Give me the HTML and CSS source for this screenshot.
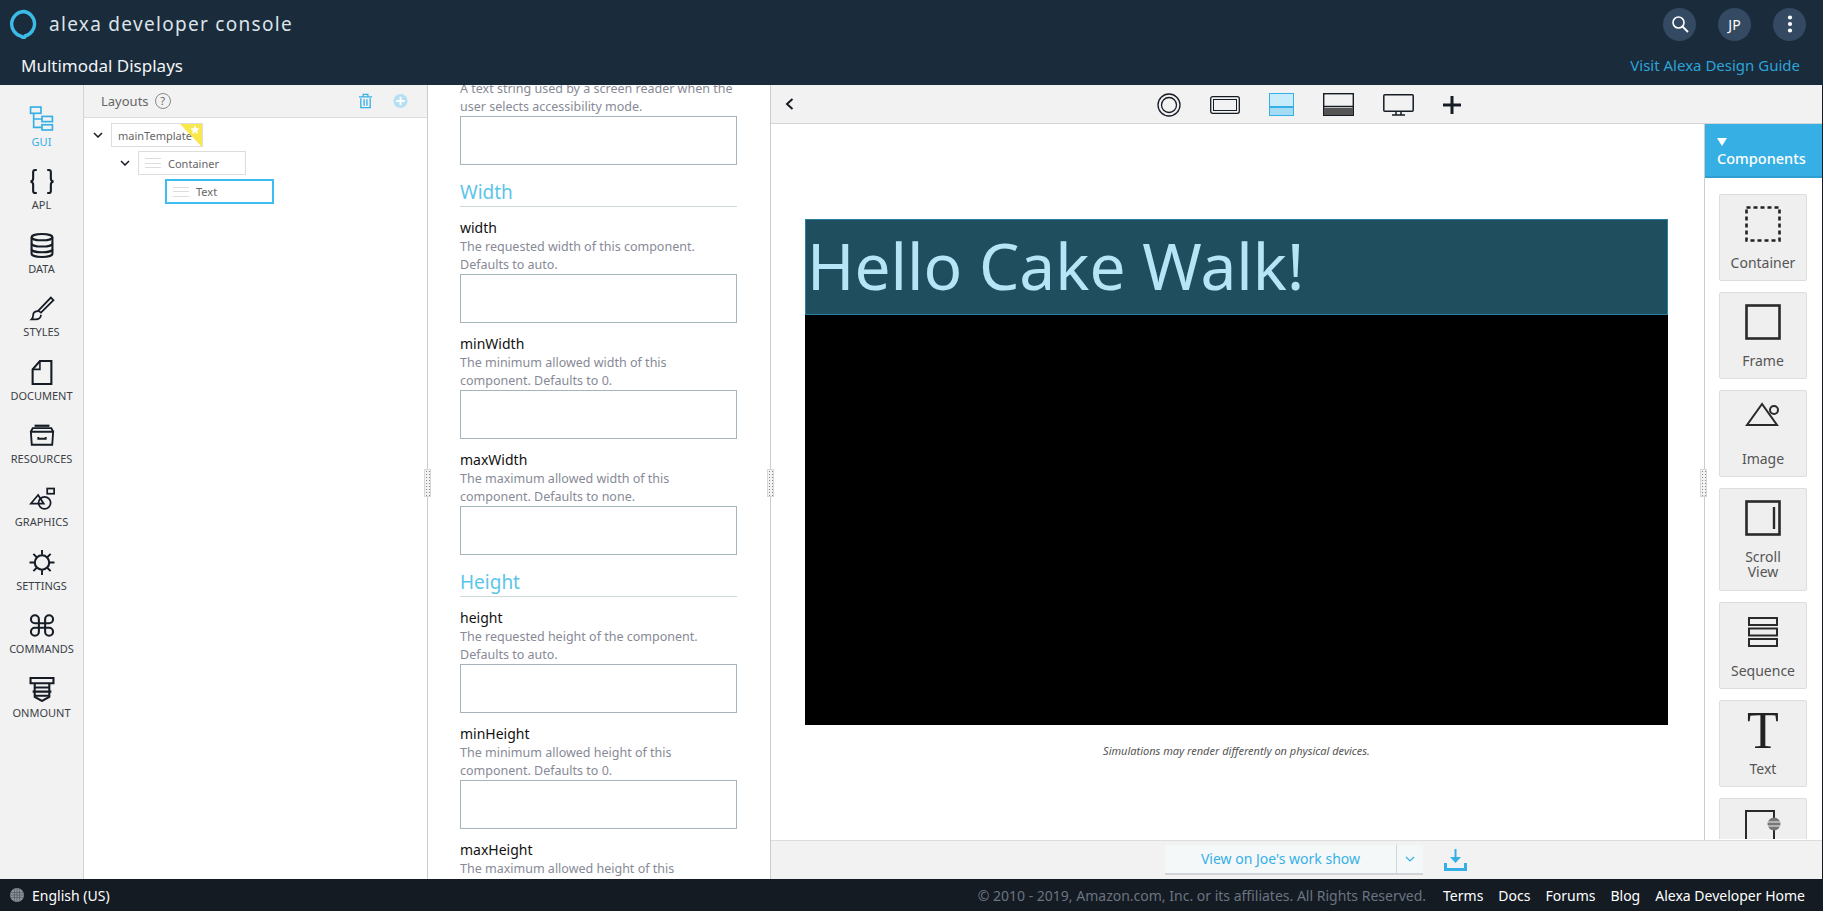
FILE: index.html
```html
<!DOCTYPE html>
<html>
  <head>
    <meta charset="UTF-8" />
    <title>Multimodal Displays</title>
    <link rel="stylesheet" href="styles.css">
  </head>
  <body>
    <header class="top-bar">
      <div class="top-row">
        <svg class="logo" viewBox="0 0 30 30"><path d="M15 2.5a12.5 12.5 0 0 0-3 24.6l3 2.4 1-2.5A12.5 12.5 0 0 0 15 2.5z" fill="none" stroke="#3dbbe8" stroke-width="3.4"/></svg>
        <span class="brand">alexa developer console</span>
        <div class="top-actions">
          <span class="round-btn"><svg viewBox="0 0 20 20" width="20" height="20"><circle cx="8.5" cy="8.5" r="5.5" fill="none" stroke="#fff" stroke-width="1.6"/><path d="M12.5 12.5l5.5 5.5" stroke="#fff" stroke-width="1.8"/></svg></span>
          <span class="round-btn">JP</span>
          <span class="round-btn"><svg viewBox="0 0 20 20" width="20" height="20"><circle cx="10" cy="3.5" r="2.1" fill="#fff"/><circle cx="10" cy="10" r="2.1" fill="#fff"/><circle cx="10" cy="16.5" r="2.1" fill="#fff"/></svg></span>
        </div>
      </div>
      <div class="sub-row">
        <span class="page-title">Multimodal Displays</span>
        <a class="guide-link">Visit Alexa Design Guide</a>
      </div>
    </header>

    <main class="workspace">
      <nav class="rail">
        <div class="rail-item active">
          <svg viewBox="0 0 24 24"><g fill="none" stroke="#35b0e6" stroke-width="1.6"><rect x="1" y="1" width="10" height="6"/><rect x="12" y="10" width="10" height="5"/><rect x="12" y="18" width="10" height="5"/><path d="M4 7v13.5h8M4 12.5h8"/></g></svg>
          <span>GUI</span>
        </div>
        <div class="rail-item">
          <svg viewBox="0 0 24 24"><g fill="none" stroke="#161c26" stroke-width="2"><path d="M7 1H5.5Q3.500 1 3.500 3v6q0 2.500-2.500 3 2.500.5 2.500 3v6q0 2 2 2H7"/><path d="M17 1h1.500q2 0 2 2v6q0 2.500 2.500 3-2.500.5-2.500 3v6q0 2-2 2H17"/></g></svg>
          <span>APL</span>
        </div>
        <div class="rail-item">
          <svg viewBox="0 0 24 24"><g fill="none" stroke="#161c26" stroke-width="2"><ellipse cx="12" cy="4" rx="10" ry="3"/><path d="M2 4v16c0 1.700 4.500 3 10 3s10-1.300 10-3V4"/><path d="M2 10c0 1.700 4.500 3 10 3s10-1.300 10-3M2 15.500c0 1.700 4.500 3 10 3s10-1.300 10-3"/></g></svg>
          <span>DATA</span>
        </div>
        <div class="rail-item">
          <svg viewBox="0 0 24 24"><g fill="none" stroke="#161c26" stroke-width="1.700"><path d="M8.500 14L20.500 1.500l2.500 2.500L11 16z"/><path d="M8.500 14.500c-3 0-5 1.500-5 4 0 1.500-.5 3-1.500 4h4c3 0 5-2 5-4.500"/></g></svg>
          <span>STYLES</span>
        </div>
        <div class="rail-item">
          <svg viewBox="0 0 24 24"><g fill="none" stroke="#161c26" stroke-width="2"><path d="M10 1h11v22H3V9z"/><path d="M10 1v8H3" stroke-width="1.500"/></g></svg>
          <span>DOCUMENT</span>
        </div>
        <div class="rail-item">
          <svg viewBox="0 0 28 24"><g fill="none" stroke="#161c26" stroke-width="2"><path d="M2 8h24l-1 14H3z"/><path d="M2 8l2-4h20l2 4"/><path d="M6 1.500h16" stroke-width="2.400"/><path d="M10 13.500v2h8v-2"/></g></svg>
          <span>RESOURCES</span>
        </div>
        <div class="rail-item">
          <svg viewBox="0 0 30 26"><g fill="none" stroke="#161c26" stroke-width="2"><rect x="21" y="1.500" width="8" height="6"/><path d="M10.500 9L2 19h15z"/><circle cx="18" cy="18" r="7"/></g></svg>
          <span>GRAPHICS</span>
        </div>
        <div class="rail-item">
          <svg viewBox="0 0 26 26"><circle cx="13" cy="13" r="7.500" fill="none" stroke="#161c26" stroke-width="2.200"/><g stroke="#161c26" stroke-width="2"><path d="M13 0v5M13 21v5M0 13h5M21 13h5M4 4l3.500 3.500M18.500 18.500L22 22M22 4l-3.500 3.500M7.500 18.500L4 22"/></g></svg>
          <span>SETTINGS</span>
        </div>
        <div class="rail-item">
          <svg viewBox="0 0 24 24"><path d="M15 6v12a3.800 3.800 0 1 0 3.800-3.800H5.200A3.800 3.800 0 1 0 9 18V6a3.800 3.800 0 1 0-3.800 3.800h13.600A3.800 3.800 0 1 0 15 6" fill="none" stroke="#161c26" stroke-width="2"/></svg>
          <span>COMMANDS</span>
        </div>
        <div class="rail-item">
          <svg viewBox="0 0 24 24"><g fill="none" stroke="#161c26" stroke-width="2"><path d="M1 1h22v5H1z"/><path d="M5 6v13l7 4 7-4V6"/><path d="M5 10h14M3 14h18M5 18h14"/></g></svg>
          <span>ONMOUNT</span>
        </div>
      </nav>

      <section class="layouts">
        <div class="layouts-head">
          <span class="layouts-title">Layouts</span>
          <span class="help-dot">?</span>
          <svg class="head-icon trash" viewBox="0 0 16 16"><g fill="none" stroke="#35b0e6" stroke-width="1.400"><path d="M1 3.500h14M5.500 3V1h5v2"/><path d="M3 5v10h10V5M6.500 6v7M9.500 6v7"/></g></svg>
          <svg class="head-icon" viewBox="0 0 16 16"><circle cx="8" cy="8" r="7.500" fill="#b5e0f4"/><path d="M8 3.500v9M3.500 8h9" stroke="#fff" stroke-width="2"/></svg>
        </div>
        <div class="tree">
          <div class="tree-row">
            <svg class="chevron" viewBox="0 0 10 6"><path d="M1 1l4 4 4-4" fill="none" stroke="#161c26" stroke-width="1.500"/></svg>
            <div class="node node-root">mainTemplate
              <svg class="star-badge" viewBox="0 0 22 23"><path d="M0 0h22v23z" fill="#f8e84a"/><path d="M15 1l1.400 3.200 3.400.3-2.600 2.200.8 3.300-3-1.800-3 1.800.8-3.300-2.600-2.200 3.400-.3z" fill="#fff"/></svg>
            </div>
          </div>
          <div class="tree-row level-1">
            <svg class="chevron" viewBox="0 0 10 6"><path d="M1 1l4 4 4-4" fill="none" stroke="#161c26" stroke-width="1.500"/></svg>
            <div class="node"><span class="grip"></span>Container</div>
          </div>
          <div class="tree-row level-2">
            <div class="node selected"><span class="grip"></span>Text</div>
          </div>
        </div>
        <span class="split-handle"></span>
      </section>

      <section class="props">
        <div class="props-scroll">
          <div class="field">
            <p>A text string used by a screen reader when the user selects accessibility mode.</p>
            <input type="text" />
          </div>
          <h3>Width</h3>
          <div class="field">
            <label>width</label>
            <p>The requested width of this component. Defaults to auto.</p>
            <input type="text" />
          </div>
          <div class="field">
            <label>minWidth</label>
            <p>The minimum allowed width of this component. Defaults to 0.</p>
            <input type="text" />
          </div>
          <div class="field">
            <label>maxWidth</label>
            <p>The maximum allowed width of this component. Defaults to none.</p>
            <input type="text" />
          </div>
          <h3>Height</h3>
          <div class="field">
            <label>height</label>
            <p>The requested height of the component. Defaults to auto.</p>
            <input type="text" />
          </div>
          <div class="field">
            <label>minHeight</label>
            <p>The minimum allowed height of this component. Defaults to 0.</p>
            <input type="text" />
          </div>
          <div class="field">
            <label>maxHeight</label>
            <p>The maximum allowed height of this component. Defaults to none.</p>
            <input type="text" />
          </div>
        </div>
        <span class="split-handle"></span>
      </section>

      <section class="preview">
        <div class="toolbar">
          <svg class="back" viewBox="0 0 9 12"><path d="M7.500 1L2 6l5.500 5" fill="none" stroke="#161c26" stroke-width="2"/></svg>
          <div class="devices">
            <svg width="24" height="24" viewBox="0 0 24 24"><g fill="none" stroke="#161c26" stroke-width="1.300"><circle cx="12" cy="12" r="11"/><circle cx="12" cy="12" r="7.500"/></g></svg>
            <svg width="30" height="18" viewBox="0 0 30 18"><rect x=".7" y=".7" width="28.600" height="16.600" rx="2" fill="none" stroke="#161c26" stroke-width="1.300"/><rect x="3.500" y="3.500" width="23" height="11" fill="none" stroke="#161c26"/></svg>
            <svg width="25" height="23" viewBox="0 0 25 23"><rect width="25" height="23" fill="#35b0e6"/><rect x="1" y="1" width="23" height="12" fill="#c9ecfa"/><rect x="1" y="15" width="23" height="7" fill="#a6dcf3"/></svg>
            <svg width="31" height="23" viewBox="0 0 31 23"><rect x=".7" y=".7" width="29.600" height="21.600" fill="#f2f2f2" stroke="#161c26" stroke-width="1.400"/><path d="M1 13.500h29" stroke="#161c26" stroke-width="1.500"/><rect x="1" y="15" width="29" height="7" fill="#555"/></svg>
            <svg width="31" height="22" viewBox="0 0 31 22"><g fill="none" stroke="#161c26" stroke-width="1.500"><rect x=".8" y=".8" width="29.400" height="16.400" rx="1"/><path d="M13 17v4M18 17v4M9 21h13"/></g></svg>
            <svg width="18" height="18" viewBox="0 0 18 18"><path d="M9 0v18M0 9h18" stroke="#161c26" stroke-width="3"/></svg>
          </div>
        </div>

        <div class="preview-body">
          <div class="stage">
            <div class="screen">
              <div class="hello">Hello Cake Walk!</div>
            </div>
            <p class="caption">Simulations may render differently on physical devices.</p>
          </div>
          <aside class="components">
            <span class="split-handle"></span>
            <div class="components-head">
              <span class="triangle"></span>
              <span>Components</span>
            </div>
            <div class="cards">
              <div class="card">
                <svg viewBox="0 0 36 36"><rect x="1.500" y="1.500" width="33" height="33" fill="none" stroke="#222" stroke-width="2.600" stroke-dasharray="4 3"/></svg>
                <span>Container</span>
              </div>
              <div class="card">
                <svg viewBox="0 0 36 36"><rect x="1.500" y="1.500" width="33" height="33" fill="none" stroke="#2a2a2a" stroke-width="2.600"/></svg>
                <span>Frame</span>
              </div>
              <div class="card">
                <svg viewBox="0 0 36 36"><g fill="none" stroke="#2a2a2a" stroke-width="2"><path d="M17 2L2 23h30z"/><circle cx="29" cy="8" r="4" fill="#efefef"/></g></svg>
                <span>Image</span>
              </div>
              <div class="card tall">
                <svg viewBox="0 0 36 36"><rect x="1.500" y="1.500" width="33" height="33" fill="none" stroke="#2a2a2a" stroke-width="2.600"/><path d="M29 7v22" stroke="#2a2a2a" stroke-width="2.400"/></svg>
                <span>Scroll<br>View</span>
              </div>
              <div class="card">
                <svg viewBox="0 0 36 36"><g fill="none" stroke="#2a2a2a" stroke-width="2"><rect x="4" y="4" width="28" height="7"/><rect x="4" y="14.500" width="28" height="7"/><rect x="4" y="25" width="28" height="7"/></g></svg>
                <span>Sequence</span>
              </div>
              <div class="card">
                <div class="t-glyph">T</div>
                <span>Text</span>
              </div>
              <div class="card">
                <svg viewBox="0 0 36 36"><path d="M1 36V1h28v34" fill="none" stroke="#2a2a2a" stroke-width="2"/><circle cx="29" cy="14" r="6.500" fill="#777"/><path d="M22 12h14M22 16h14" stroke="#efefef"/></svg>
              </div>
            </div>
          </aside>
        </div>

        <div class="preview-foot">
          <div class="view-btn">
            <span class="view-label">View on Joe's work show</span>
            <span class="view-arrow"><svg width="10" height="6" viewBox="0 0 10 6"><path d="M1 1l4 4 4-4" fill="none" stroke="#35b0e6" stroke-width="1.200"/></svg></span>
          </div>
          <svg class="download" viewBox="0 0 23 22"><path d="M11.500 0v12" stroke="#35b0e6" stroke-width="2"/><path d="M6 8h11l-5.500 6z" fill="#35b0e6"/><path d="M1.500 14v6.500h20V14" fill="none" stroke="#35b0e6" stroke-width="3"/></svg>
        </div>
      </section>
    </main>

    <footer class="bottom-bar">
      <svg class="globe" viewBox="0 0 14 14"><circle cx="7" cy="7" r="7" fill="#8b9299"/><path d="M0 4.500h14M0 7h14M0 9.500h14M4.500 0v14M7 0v14M9.500 0v14" stroke="#4a5159" stroke-width=".6"/></svg>
      <span class="lang">English (US)</span>
      <span class="copyright">© 2010 - 2019, Amazon.com, Inc. or its affiliates. All Rights Reserved.</span>
      <div class="foot-links">
        <a>Terms</a>
        <a>Docs</a>
        <a>Forums</a>
        <a>Blog</a>
        <a>Alexa Developer Home</a>
      </div>
    </footer>
  </body>
</html>
```

FILE: styles.css
```css
* {
  box-sizing: border-box;
}

html, body {
  height: 100%;
}

body {
  margin: 0;
  height: 911px;
  overflow: hidden;
  display: flex;
  flex-direction: column;
  font-family: "Noto Sans", sans-serif;
  background-color: #141b23;
}

.top-bar {
  height: 85px;
  flex: none;
  background-color: #1a2b3b;
  color: #fff;
}

.top-row {
  height: 47px;
  display: flex;
  align-items: center;
  padding: 1px 17px 0 9px;
}

.logo {
  width: 30px;
  height: 30px;
}

.brand {
  margin-left: 10px;
  font-size: 19px;
  letter-spacing: 1.3px;
  color: #dde4e9;
}

.top-actions {
  margin-left: auto;
  display: flex;
  gap: 22px;
}

.round-btn {
  width: 33px;
  height: 33px;
  border-radius: 50%;
  background-color: #344a63;
  display: flex;
  align-items: center;
  justify-content: center;
  font-size: 14px;
}

.sub-row {
  display: flex;
  justify-content: space-between;
  align-items: center;
  height: 36px;
  padding: 0 23px 0 21px;
}

.page-title {
  font-size: 17px;
  color: #f2f5f7;
}

.guide-link {
  font-size: 15px;
  color: #2ea3d8;
}

.workspace {
  flex: 1;
  min-height: 0;
  display: flex;
  margin-right: 1px;
  background-color: #fff;
}

/* left icon rail */
.rail {
  width: 84px;
  flex: none;
  padding-top: 21px;
  background-color: #f2f2f2;
  border-right: 1px solid #d5d5d5;
}

.rail-item {
  height: 63.4px;
  display: flex;
  flex-direction: column;
  align-items: center;
  color: #3a3f47;
  font-size: 11px;
  line-height: 14px;
}

.rail-item svg {
  width: 26px;
  height: 25px;
  margin-bottom: 4px;
}

.rail-item.active {
  color: #35b0e6;
}

/* layouts tree */
.layouts {
  position: relative;
  width: 344px;
  flex: none;
  border-right: 1px solid #ccc;
}

.layouts-head {
  height: 33px;
  display: flex;
  align-items: center;
  padding: 0 19px 0 17px;
  background-color: #f2f2f2;
  border-bottom: 1px solid #ddd;
  color: #666;
  font-size: 13px;
}

.help-dot {
  width: 16px;
  height: 16px;
  margin-left: 6px;
  border: 1px solid #888;
  border-radius: 50%;
  font-size: 11px;
  line-height: 14px;
  text-align: center;
}

.head-icon {
  width: 15px;
  height: 16px;
  margin-left: 20px;
}

.head-icon.trash {
  margin-left: auto;
}

.tree {
  padding: 5px 0 0 9px;
}

.tree-row {
  display: flex;
  align-items: center;
  margin-bottom: 4px;
}

.level-1 {
  margin-left: 27px;
}

.level-2 {
  margin-left: 72px;
  margin-bottom: 0;
}

.chevron {
  width: 10px;
  height: 6px;
  margin-right: 8px;
}

.node {
  position: relative;
  width: 108px;
  height: 24px;
  display: flex;
  align-items: center;
  padding-left: 6px;
  border: 1px solid #ddd;
  font-size: 11px;
  color: #666;
}

.node-root {
  width: 92px;
}

.node.selected {
  width: 109px;
  height: 25px;
  border: 2px solid #3dbdf0;
}

.grip {
  width: 16px;
  height: 10px;
  margin-right: 7px;
  border-top: 1px solid #ddd;
  border-bottom: 1px solid #ddd;
  background: linear-gradient(#ddd, #ddd) center / 100% 1px no-repeat;
}

.star-badge {
  position: absolute;
  top: 0;
  right: 0;
  width: 22px;
  height: 23px;
}

/* properties form */
.props {
  position: relative;
  width: 343px;
  flex: none;
  border-right: 1px solid #ccc;
}

.props-scroll {
  height: 792px;
  overflow: hidden;
  padding: 0 33px 0 32px;
}

.props-scroll .field:first-child {
  margin-top: -5px;
}

.field {
  padding-bottom: 11px;
}

.field label {
  display: block;
  height: 20px;
  font-size: 14px;
  line-height: 20px;
  color: #111;
}

.field p {
  margin: 0;
  height: 36px;
  font-size: 12.500px;
  line-height: 18px;
  color: #878a96;
}

.field input {
  display: block;
  width: 100%;
  height: 49px;
  border: 1px solid #a4b4ba;
  background-color: #fff;
}

.props h3 {
  height: 31px;
  margin: 0 0 11px;
  font-size: 19px;
  line-height: 32px;
  font-weight: 400;
  color: #5cc5ea;
  border-bottom: 1px solid #cfd8db;
}

/* drag handles on the panel edges */
.split-handle {
  position: absolute;
  z-index: 2;
  top: 384px;
  right: -4px;
  width: 7px;
  height: 28px;
  background-color: #f2f2f2;
  border: 1px solid #d8d8d8;
  background-image: radial-gradient(#888 .7px, transparent .8px);
  background-size: 3px 3px;
}

/* preview area */
.preview {
  flex: 1;
  min-width: 0;
  display: flex;
  flex-direction: column;
}

.toolbar {
  position: relative;
  height: 39px;
  flex: none;
  display: flex;
  align-items: center;
  justify-content: center;
  background-color: #f2f2f2;
  border-bottom: 1px solid #d5d5d5;
}

.back {
  position: absolute;
  left: 14px;
  top: 13px;
  width: 9px;
  height: 12px;
}

.devices {
  display: flex;
  align-items: center;
  gap: 29px;
  margin-left: 24px;
  margin-top: 1px;
}

.preview-body {
  flex: 1;
  min-height: 0;
  display: flex;
}

.stage {
  flex: 1;
  min-width: 0;
  padding: 95px 36px 0 34px;
}

.screen {
  height: 506px;
  background-color: #000;
}

.hello {
  height: 96px;
  padding: 0 1px;
  background-color: #1f4e5f;
  border: 1px solid #2a7f9e;
  color: #b5e5f7;
  font-size: 64px;
  line-height: 92px;
  white-space: nowrap;
}

.caption {
  margin: 18px 0 0;
  font-size: 11px;
  line-height: 16px;
  font-style: italic;
  text-align: center;
  color: #555;
}

.components {
  position: relative;
  width: 118px;
  flex: none;
  border-left: 1px solid #ccc;
}

.components .split-handle {
  right: auto;
  left: -5px;
  top: 345px;
}

.components-head {
  height: 54px;
  display: flex;
  flex-direction: column;
  padding: 14px 12px 0;
  background-color: #36b0e4;
  border-bottom: 2px solid #2f9fd0;
  color: #fff;
  font-size: 14.500px;
  font-weight: 500;
  line-height: 18px;
}

.triangle {
  width: 0;
  height: 0;
  margin-bottom: 3px;
  border-left: 5px solid transparent;
  border-right: 5px solid transparent;
  border-top: 8px solid #fff;
}

.cards {
  height: 661px;
  overflow: hidden;
  padding: 16px 15px 0 14px;
  display: flex;
  flex-direction: column;
  gap: 11px;
}

.card {
  height: 87px;
  flex: none;
  display: flex;
  flex-direction: column;
  align-items: center;
  padding-top: 11px;
  background-color: #efefef;
  border: 1px solid #ddd;
  border-radius: 2px;
  font-size: 14px;
  line-height: 15px;
  color: #555;
  text-align: center;
}

.card.tall {
  height: 103px;
}

.card svg {
  width: 36px;
  height: 36px;
  flex: none;
  margin-bottom: 13px;
}

.t-glyph {
  height: 36px;
  margin-bottom: 13px;
  font-family: "Liberation Serif", serif;
  font-size: 52px;
  line-height: 38px;
  color: #222;
}

.preview-foot {
  height: 39px;
  flex: none;
  display: flex;
  align-items: center;
  padding-left: 394px;
  background-color: #f2f2f2;
  border-top: 1px solid #ddd;
}

.view-btn {
  width: 258px;
  height: 30px;
  display: flex;
  background-color: #f5f8f9;
  border-bottom: 2px solid #d0d4d8;
  font-size: 14px;
  line-height: 28px;
  color: #35b0e6;
}

.view-label {
  flex: 1;
  text-align: center;
}

.view-arrow {
  width: 27px;
  display: flex;
  align-items: center;
  justify-content: center;
  border-left: 1px solid #d0d4d8;
}

.download {
  width: 23px;
  height: 22px;
  margin-left: 21px;
}

/* page footer */
.bottom-bar {
  height: 32px;
  flex: none;
  display: flex;
  align-items: center;
  padding: 0 18px 0 10px;
  background-color: #141b23;
  font-size: 14px;
  color: #fff;
}

.globe {
  width: 14px;
  height: 14px;
  margin-right: 8px;
}

.copyright {
  margin-left: auto;
  color: #6b7480;
}

.foot-links {
  display: flex;
  gap: 15px;
  margin-left: 17px;
}
```
